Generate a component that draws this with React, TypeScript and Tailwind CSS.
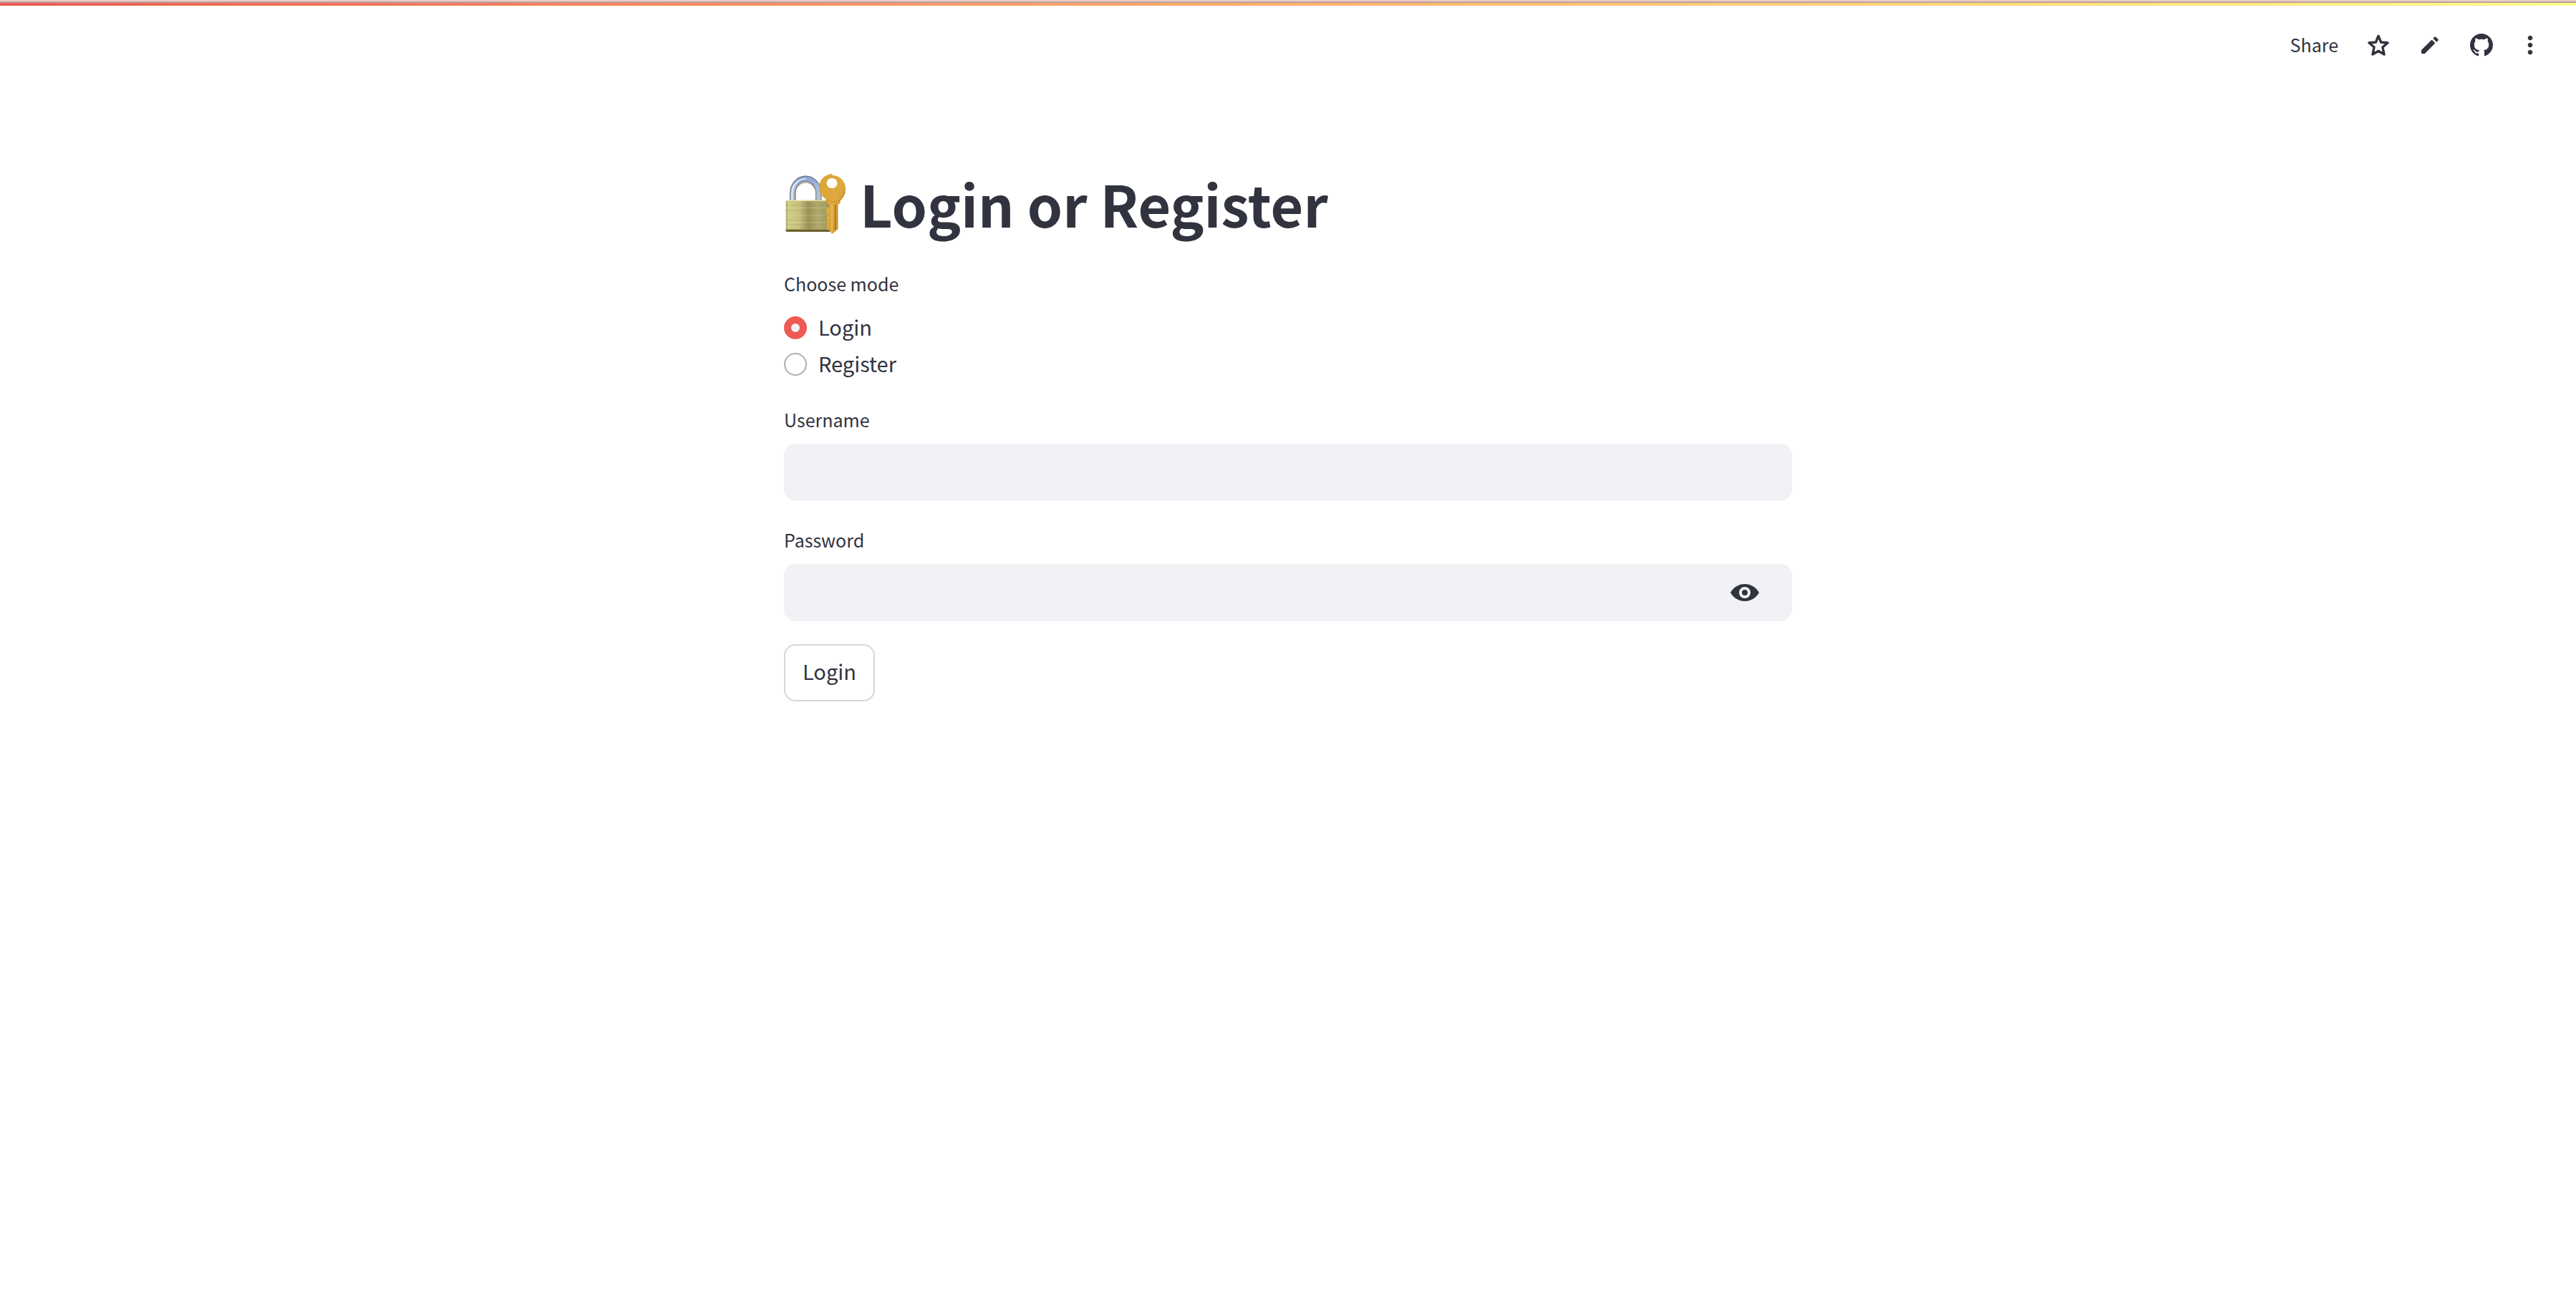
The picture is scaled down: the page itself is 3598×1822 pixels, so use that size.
import { useState } from "react";
import type { ReactNode } from "react";
import { MdMoreVert } from "react-icons/md";

function StarIcon() {
  return (
    <svg
      viewBox="0 0 30 30"
      fill="none"
      stroke="currentColor"
      strokeWidth="3.4"
      strokeLinejoin="round"
      className="size-[30px]"
      aria-hidden="true"
    >
      <path d="M15 2.200 18.600 11 28 11.800 20.900 18 23.100 28 15 23.200 6.900 28 9.100 18 2 11.800 11.400 11Z" />
    </svg>
  );
}

function PencilIcon() {
  return (
    <svg viewBox="0 0 24 24" fill="currentColor" className="size-6" aria-hidden="true">
      <path d="M0 19 14.600 4.400 19.400 9.200 4.800 24H1Q0 24 0 23Z" />
      <path d="M16.300 2.700 18.300.700Q19.200-.2 20.200.700L23.300 3.800Q24.200 4.700 23.300 5.700L21.300 7.700Z" />
    </svg>
  );
}

function GithubIcon() {
  return (
    <svg viewBox="0 0 16 16" fill="currentColor" className="size-8" aria-hidden="true">
      <path d="M8 0C3.58 0 0 3.58 0 8c0 3.54 2.29 6.53 5.47 7.59.4.07.55-.17.55-.38 0-.19-.01-.82-.01-1.49-2.01.37-2.53-.49-2.69-.94-.09-.23-.48-.94-.82-1.13-.28-.15-.68-.52-.01-.53.63-.01 1.08.58 1.23.82.72 1.21 1.87.87 2.33.66.07-.52.28-.87.51-1.07-1.78-.2-3.64-.89-3.64-3.95 0-.87.31-1.59.82-2.15-.08-.2-.36-1.02.08-2.12 0 0 .67-.21 2.2.82.64-.18 1.32-.27 2-.27s1.36.09 2 .27c1.53-1.04 2.2-.82 2.2-.82.44 1.1.16 1.92.08 2.12.51.56.82 1.27.82 2.15 0 3.07-1.87 3.75-3.65 3.95.29.25.54.73.54 1.48 0 1.07-.01 1.93-.01 2.2 0 .21.15.46.55.38A8.01 8.01 0 0 0 16 8c0-4.42-3.58-8-8-8Z" />
    </svg>
  );
}

function EyeIcon() {
  return (
    <svg viewBox="0 0 40 24" fill="currentColor" className="h-6 w-10" aria-hidden="true">
      <path
        fillRule="evenodd"
        d="M20 0C11.500 0 4 4.800 0 12c4 7.200 11.500 12 20 12s16-4.800 20-12C36 4.800 28.500 0 20 0Zm0 20a8 8 0 1 1 0-16 8 8 0 0 1 0 16Z"
      />
      <circle cx="20" cy="12" r="4" />
    </svg>
  );
}

function LockAndKey() {
  return (
    <svg viewBox="42 30 270 270" className="size-[90px] shrink-0" role="img" aria-label="Locked with key">
      <defs>
        <linearGradient id="brass" x1="0" x2="1">
          <stop offset="0" stopColor="#a9a263" />
          <stop offset=".05" stopColor="#d2cd88" />
          <stop offset=".3" stopColor="#c5c07d" />
          <stop offset=".5" stopColor="#98925a" />
          <stop offset=".72" stopColor="#b0ab6e" />
          <stop offset="1" stopColor="#9c9555" />
        </linearGradient>
        <linearGradient id="steel" x1="0" x2="0" y1="0" y2="1">
          <stop offset="0" stopColor="#8ba6d2" />
          <stop offset=".4" stopColor="#a9bfe2" />
          <stop offset="1" stopColor="#b9c0cd" />
        </linearGradient>
        <linearGradient id="gold" x1="0" x2="1" y1="0" y2="1">
          <stop offset="0" stopColor="#d9a436" />
          <stop offset=".5" stopColor="#deaa3e" />
          <stop offset="1" stopColor="#c68e2a" />
        </linearGradient>
      </defs>
      <path d="M79 152V122a54 60 0 0 1 108-6v36" fill="none" stroke="#62656f" strokeWidth="25" />
      <path d="M79 152V122a54 60 0 0 1 108-6v36" fill="none" stroke="url(#steel)" strokeWidth="19" />
      <path d="M76 150V122a56 61 0 0 1 58-62" fill="none" stroke="#eef3fb" strokeWidth="5" />
      <path d="M88 150V122a45 50 0 0 1 84-22" fill="none" stroke="#8b8468" strokeWidth="3" />
      <rect x="50" y="149" width="187" height="132" rx="4" fill="url(#brass)" />
      <path d="M52 151h184" stroke="#e6e2a8" strokeWidth="4" />
      <path d="M52 171h182M52 193h182M52 233h182M52 251h182" stroke="#8f8a4e" strokeWidth="2" opacity=".35" />
      <path d="M52 181h182M52 213h182M52 243h182" stroke="#f0ecb0" strokeWidth="3" opacity=".3" />
      <path d="M50 272h187v5q0 4-4 4H54q-4 0-4-4Z" fill="#655a2c" />
      <path d="M52 272h184" stroke="#a39a5a" strokeWidth="3" />
      <path d="M232 178q-13 6-13 17t11 15l-11 13 11 7q-8 3-8 8t8 7l-11 10 11 6q-8 2-8 7t10 5Z" fill="#e9b52f" />
      <path
        fillRule="evenodd"
        d="M245 45c31 0 55 25 55 56 0 22-9 38-22 50v11l-10 6v102l-24 21-12-14v-14l-10-4 10-14v-6l-12-8 12-15v-6l-14-12 14-15v-15l-14-12v-11c-17-12-29-28-29-50 0-30 25-56 56-56Zm-2 12c-13 0-22 9-22 21s9 21 22 21 22-9 22-21-9-21-22-21Z"
        fill="url(#gold)"
      />
      <path d="M214 148q30 15 64 1" fill="none" stroke="#b97c1b" strokeWidth="2" />
      <path d="M243 168v120" stroke="#f0c357" strokeWidth="4" />
      <path d="M257 168v106" stroke="#a8721c" strokeWidth="5" />
      <path d="M266 168v102" stroke="#bd8422" strokeWidth="3" />
      <path d="M297 112c-3 18-12 31-21 38" fill="none" stroke="#b97d20" strokeWidth="3" />
    </svg>
  );
}

function IconButton({ label, children }: { label: string; children: ReactNode }) {
  return (
    <button type="button" aria-label={label} className="flex size-10 items-center justify-center">
      {children}
    </button>
  );
}

function RadioOption({ label, checked, onSelect }: { label: string; checked: boolean; onSelect: () => void }) {
  return (
    <label className="flex items-center gap-4 text-[29px] leading-[49px]">
      <input
        type="radio"
        name="mode"
        checked={checked}
        onChange={onSelect}
        className="size-8 appearance-none rounded-full border-2 border-[#adaeb3] bg-white checked:border-10 checked:border-[#ec5a53] checked:bg-[#f0f2f6]"
      />
      <span className="pb-0.5">{label}</span>
    </label>
  );
}

const fieldClass = "h-20 w-full rounded-2xl bg-[#f0f2f6] px-6 text-[29px] outline-none";
const labelClass = "block text-[25px] leading-10";

export default function App() {
  const [mode, setMode] = useState("Login");
  const [visible, setVisible] = useState(false);

  return (
    <div className="min-h-screen bg-white font-['Noto_Sans_CJK_SC',sans-serif] text-[#31333f]">
      <div className="h-0.5 bg-[#edccc7]" />
      <div className="h-0.5 bg-[#bba39e]" />
      <div className="h-1 bg-linear-to-r from-[#ec5a53] to-[#fffd85]" />

      <header className="flex h-[110px] items-center justify-end gap-8 pr-12">
        <button type="button" className="mr-1 pb-0.5 text-[25px] leading-10">
          Share
        </button>
        <IconButton label="Favorite">
          <StarIcon />
        </IconButton>
        <IconButton label="Edit">
          <PencilIcon />
        </IconButton>
        <IconButton label="View source on GitHub">
          <GithubIcon />
        </IconButton>
        <button type="button" aria-label="More options" className="flex h-10 w-8 items-center justify-center">
          <MdMoreVert className="size-10 shrink-0" />
        </button>
      </header>

      <main className="mx-auto w-full max-w-[1408px] pt-[114px]">
        <h1 className="flex items-center gap-4 text-[79px] leading-[104px] font-bold">
          <LockAndKey />
          <span className="pb-0.5">Login or Register</span>
        </h1>

        <form onSubmit={(e) => e.preventDefault()}>
          <fieldset className="mt-[38px]">
            <legend className="mb-4 text-[25px] leading-10">Choose mode</legend>
            <RadioOption label="Login" checked={mode === "Login"} onSelect={() => setMode("Login")} />
            <RadioOption label="Register" checked={mode === "Register"} onSelect={() => setMode("Register")} />
          </fieldset>

          <div className="mt-8">
            <label htmlFor="username" className={labelClass}>
              Username
            </label>
            <input id="username" type="text" className={`mt-3.5 ${fieldClass}`} />
          </div>

          <div className="mt-[34px]">
            <label htmlFor="password" className={labelClass}>
              Password
            </label>
            <div className="mt-3.5 flex items-center rounded-2xl bg-[#f0f2f6] pr-[46px]">
              <input id="password" type={visible ? "text" : "password"} className={fieldClass} />
              <button type="button" aria-label="Show password" onClick={() => setVisible(!visible)}>
                <EyeIcon />
              </button>
            </div>
          </div>

          <button
            type="submit"
            className="mt-8 h-20 rounded-2xl border-2 border-[#d6d6d9] bg-white px-6 pb-1 text-[29px]"
          >
            {mode}
          </button>
        </form>
      </main>
    </div>
  );
}
